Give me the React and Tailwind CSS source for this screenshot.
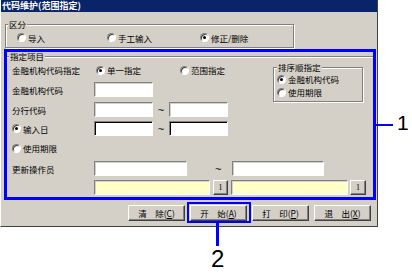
import React from 'react';

const etched = 'border border-[#808080] shadow-[1px_1px_0_#fff,inset_1px_1px_0_#fff]';

function Radio({ checked, label }) {
  return (
    <span className="flex items-center gap-[2px]">
      <span className="flex h-[9px] w-[9px] shrink-0 items-center justify-center rounded-full border border-t-[#808080] border-l-[#808080] border-r-white border-b-white bg-white shadow-[inset_1px_1px_0_#404040]">
        {checked && <span className="h-[3px] w-[3px] rounded-full bg-black" />}
      </span>
      <span>{label}</span>
    </span>
  );
}

function Input({ className }) {
  return (
    <div
      className={`h-[15px] border border-t-[#808080] border-l-[#808080] border-r-white border-b-white ${className}`}
    />
  );
}

function Btn({ children, className }) {
  return (
    <div
      className={`flex items-center justify-center border border-t-white border-l-white border-r-[#404040] border-b-[#404040] bg-[#d4d0c8] shadow-[inset_-1px_-1px_0_#808080] ${className}`}
    >
      {children}
    </div>
  );
}

export default function App() {
  return (
    <div className="relative h-[275px] w-[412px] overflow-hidden bg-white font-['Noto_Sans_CJK_SC','Noto_Sans',sans-serif] text-[8.5px] leading-[12px] text-black">
      {/* dialog window */}
      <div className="flex h-[227px] w-[378px] flex-col border-l border-r border-b border-l-white border-r-[#404040] border-b-[#404040] bg-[#d4d0c8]">
        <div className="flex h-[12px] items-center bg-[#0a246a] pl-[1px] text-[9px] font-bold text-white">
          代码维护(范围指定)
        </div>

        {/* 区分 */}
        <div className={`relative ml-[4px] mt-[12px] flex h-[24px] w-[289px] items-center pl-[11px] pt-[3px] ${etched}`}>
          <span className="absolute -top-[7px] left-[2px] bg-[#d4d0c8] px-[1px]">区分</span>
          <span className="w-[90px]">
            <Radio label="导入" />
          </span>
          <span className="w-[93px]">
            <Radio label="手工输入" />
          </span>
          <Radio checked label="修正/删除" />
        </div>

        {/* 指定项目 (highlighted) */}
        <div className="ml-[3px] mt-[1px] h-[151px] w-[372px] border-[3px] border-[#0000ff]">
          <div className="relative mt-[4px] h-px bg-[#808080] shadow-[0_1px_0_#fff]">
            <span className="absolute -top-[4px] left-[2px] h-[9px] bg-[#d4d0c8] px-[1px] leading-[9px]">指定项目</span>
          </div>

          <div className="flex">
            <div className="flex flex-col pl-[5px]">
              <div className="mt-[7px] flex h-[12px] items-center">
                <span className="w-[84px]">金融机构代码指定</span>
                <span className="w-[84px]">
                  <Radio checked label="单一指定" />
                </span>
                <Radio label="范围指定" />
              </div>
              <div className="mt-[6px] flex h-[15px] items-center">
                <span className="w-[82px]">金融机构代码</span>
                <Input className="w-[59px] bg-white shadow-[inset_1px_1px_0_#d4d0c8]" />
              </div>
              <div className="mt-[5px] flex h-[15px] items-center">
                <span className="w-[82px]">分行代码</span>
                <Input className="w-[59px] bg-white shadow-[inset_1px_1px_0_#d4d0c8]" />
                <span className="w-[16px] text-center font-['Liberation_Sans',sans-serif] text-[11px]">~</span>
                <Input className="w-[59px] bg-white shadow-[inset_1px_1px_0_#d4d0c8]" />
              </div>
              <div className="mt-[4px] flex h-[15px] items-center">
                <span className="w-[82px]">
                  <Radio checked label="输入日" />
                </span>
                <Input className="w-[59px] bg-white shadow-[inset_1px_1px_0_#000]" />
                <span className="w-[16px] text-center font-['Liberation_Sans',sans-serif] text-[11px]">~</span>
                <Input className="w-[59px] bg-white shadow-[inset_1px_1px_0_#000]" />
              </div>
            </div>

            {/* 排序顺指定 */}
            <div className={`relative ml-[45px] mt-[10px] flex h-[35px] w-[90px] flex-col gap-[1px] pl-[3px] pt-[5px] ${etched}`}>
              <span className="absolute -top-[7px] left-[3px] bg-[#d4d0c8] px-[1px]">排序顺指定</span>
              <div className="flex h-[12px] items-center">
                <Radio checked label="金融机构代码" />
              </div>
              <div className="flex h-[12px] items-center">
                <Radio label="使用期限" />
              </div>
            </div>
          </div>

          <div className="mt-[6px] flex h-[12px] items-center pl-[5px]">
            <Radio label="使用期限" />
          </div>
          <div className="mt-[7px] flex h-[15px] items-center pl-[5px]">
            <span className="w-[82px]">更新操作员</span>
            <Input className="w-[93px] bg-white shadow-[inset_1px_1px_0_#d4d0c8]" />
            <span className="w-[45px] pl-[28px] font-['Liberation_Sans',sans-serif] text-[11px]">~</span>
            <Input className="w-[92px] bg-white shadow-[inset_1px_1px_0_#d4d0c8]" />
          </div>
          <div className="mt-[4px] flex h-[15px] items-center pl-[87px]">
            <Input className="w-[116px] bg-[#ffffc8] shadow-[inset_1px_1px_0_#d4d0c8]" />
            <Btn className="ml-[3px] h-[15px] w-[15px] font-['Liberation_Serif',serif] text-[8px]">1</Btn>
            <Input className="ml-[3px] w-[117px] bg-[#ffffc8] shadow-[inset_1px_1px_0_#d4d0c8]" />
            <Btn className="ml-[2px] h-[15px] w-[16px] font-['Liberation_Serif',serif] text-[8px]">1</Btn>
          </div>
        </div>

        {/* action buttons */}
        <div className="mt-[5px] flex justify-end gap-[5px] pr-[6px]">
          {[
            ['清', '除', 'C'],
            ['开', '始', 'A'],
            ['打', '印', 'P'],
            ['退', '出', 'X'],
          ].map(([a, b, k]) => (
            <Btn key={k} className="h-[16px] w-[57px]">
              {a}　{b}(<span className="underline">{k}</span>)
            </Btn>
          ))}
        </div>
      </div>

      {/* callouts */}
      <div className="absolute left-[187px] top-[202px] h-[21px] w-[64px] border-2 border-[#0000ff]" />
      <div className="absolute left-[216px] top-[223px] h-[23px] w-[3px] bg-[#0000ff]" />
      <div className="absolute left-[211px] top-[247px] font-['Liberation_Sans',sans-serif] text-[24px] leading-none">2</div>
      <div className="absolute left-[375px] top-[124px] h-[2px] w-[18px] bg-[#0000ff]" />
      <div className="absolute left-[397px] top-[112px] font-['Liberation_Sans',sans-serif] text-[21px] leading-none">1</div>
    </div>
  );
}
